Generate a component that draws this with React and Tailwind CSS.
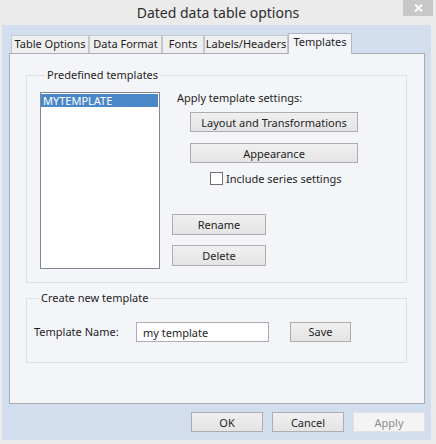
import React, { useState } from 'react';

const font = { fontFamily: '"Noto Sans", "Open Sans", sans-serif' };

const Btn = ({ children, className = '', disabled = false }) => (
  <button
    disabled={disabled}
    className={`flex items-center justify-center text-[11px] leading-none ${
      disabled
        ? 'bg-[#f4f4f4] border border-[#e2e2e2] text-[#8d8d8d]'
        : 'bg-gradient-to-b from-[#f0f0f0] to-[#e4e4e4] border border-[#adadad] text-[#1e1e1e]'
    } ${className}`}
  >
    {children}
  </button>
);

const tabs = [
  { name: 'Table Options', w: 'w-[78px]' },
  { name: 'Data Format', w: 'w-[73px]' },
  { name: 'Fonts', w: 'w-[42px]' },
  { name: 'Labels/Headers', w: 'w-[84px]' },
];

const App = () => {
  const [includeSeries, setIncludeSeries] = useState(false);
  const [templateName, setTemplateName] = useState('my template');

  return (
    <div className="w-[436px] h-[444px] bg-[#ebebeb] overflow-hidden" style={font}>
      {/* Title bar */}
      <div className="relative h-[25px] flex items-center justify-center">
        <span className="text-[14px] text-[#2d2d2d]">Dated data table options</span>
        <div className="absolute right-[3px] top-0 w-[30px] h-[16px] bg-[#c7c7c7] flex items-center justify-center">
          <svg width="9" height="8" viewBox="0 0 9 8">
            <path d="M1 0.5 L8 7.5 M8 0.5 L1 7.5" stroke="#fff" strokeWidth="1.8" />
          </svg>
        </div>
      </div>

      {/* Window body */}
      <div className="ml-[2px] w-[429px] h-[415px] bg-[#d2deee] pl-[7px] pt-[8px]">
        {/* Tabs */}
        <div className="flex items-end h-[20px] pl-[2px]">
          {tabs.map((t) => (
            <div
              key={t.name}
              className={`${t.w} h-[18px] bg-[#efefef] border border-b-0 border-[#c4c7cc] flex items-center justify-center text-[11px] text-[#1e1e1e]`}
            >
              {t.name}
            </div>
          ))}
          <div className="w-[64px] h-[21px] -mb-[1px] relative z-10 bg-[#f3f5f9] border border-b-0 border-[#b4b7bd] flex items-center justify-center text-[11px] text-[#1e1e1e] pb-[3px]">
            Templates
          </div>
        </div>

        {/* Panel */}
        <div className="w-[416px] h-[351px] bg-[#f3f5f9] border border-[#a9acb2] pt-[13px] pl-[16px]">
          <fieldset className="w-[381px] border border-[#dcdfe4] pl-[13px] pr-[10px] pt-[9px] pb-[13px]">
            <legend className="ml-[5px] px-[2px] text-[11px] leading-[16px] text-[#1e1e1e]">Predefined templates</legend>
            <div className="flex">
              <div className="w-[120px] h-[177px] bg-white border border-[#828790] pt-[1px] shrink-0">
                <div className="w-[117px] h-[13px] bg-[#4a87c9] text-white text-[11px] leading-[13px] pl-[2px]">MYTEMPLATE</div>
              </div>
              <div className="ml-[12px] flex flex-col">
                <div className="ml-[5px] -mt-[1px] h-[14px] text-[11px] leading-[14px] text-[#1e1e1e]">Apply template settings:</div>
                <Btn className="ml-[18px] mt-[7px] w-[168px] h-[20px]">Layout and Transformations</Btn>
                <Btn className="ml-[18px] mt-[11px] w-[168px] h-[20px]">Appearance</Btn>
                <label className="ml-[38px] mt-[9px] flex items-center gap-[3px] text-[11px] text-[#1e1e1e] leading-none">
                  <span
                    onClick={() => setIncludeSeries(!includeSeries)}
                    className="w-[13px] h-[13px] bg-white border border-[#707070] flex items-center justify-center text-[10px]"
                  >
                    {includeSeries ? '✓' : ''}
                  </span>
                  Include series settings
                </label>
                <Btn className="mt-[29px] w-[94px] h-[21px]">Rename</Btn>
                <Btn className="mt-[10px] w-[94px] h-[21px]">Delete</Btn>
              </div>
            </div>
          </fieldset>

          <fieldset className="mt-[7px] w-[381px] border border-[#dcdfe4] pl-[7px] pt-[16px] pb-[20px]">
            <legend className="ml-[5px] px-[2px] text-[11px] leading-[16px] text-[#1e1e1e]">Create new template</legend>
            <div className="flex items-center">
              <span className="w-[102px] text-[11px] text-[#1e1e1e]">Template Name:</span>
              <input
                value={templateName}
                onChange={(e) => setTemplateName(e.target.value)}
                className="w-[133px] h-[20px] bg-white border border-[#abadb3] px-[6px] text-[11px] text-[#1e1e1e] outline-none"
                style={font}
              />
              <Btn className="ml-[21px] -mt-[1px] w-[61px] h-[20px]">Save</Btn>
            </div>
          </fieldset>
        </div>

        {/* Dialog buttons */}
        <div className="w-[416px] mt-[8px] flex justify-end gap-[9px]">
          <Btn className="w-[72px] h-[20px]">OK</Btn>
          <Btn className="w-[72px] h-[20px]">Cancel</Btn>
          <Btn disabled className="w-[72px] h-[20px]">Apply</Btn>
        </div>
      </div>
    </div>
  );
};

export default App;
